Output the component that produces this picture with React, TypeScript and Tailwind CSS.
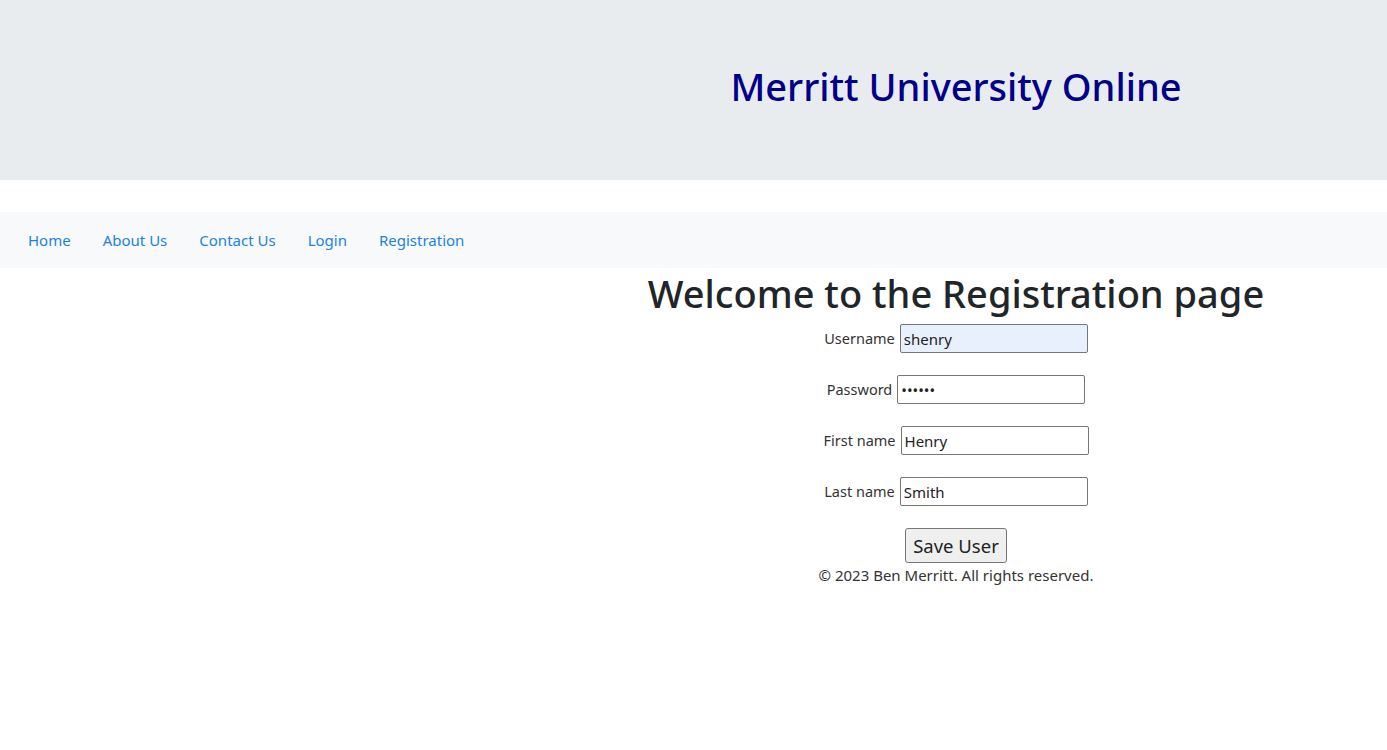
import { useState } from "react";

const font = { fontFamily: '"Noto Sans", "Open Sans", sans-serif' };

function Field({
  label,
  type = "text",
  value,
  filled,
}: {
  label: string;
  type?: string;
  value: string;
  filled?: boolean;
}) {
  const [v, setV] = useState(value);
  return (
    <div className="flex items-center justify-center h-[29px]">
      <label className="text-[14.5px] text-[#333] mr-[5px] pt-[1px]">{label}</label>
      <input
        type={type}
        value={v}
        onChange={(e) => setV(e.target.value)}
        className={
          "w-[188px] h-[29px] border border-[#767676] rounded-[2px] px-[3px] text-[15px] text-[#222] outline-none " +
          (filled ? "bg-[#e8f0fe]" : "bg-white")
        }
      />
    </div>
  );
}

export default function App() {
  return (
    <div className="min-h-[750px] bg-white" style={font}>
      <header className="h-[180px] bg-[#e9ecef] grid grid-cols-[525px_1fr] items-center">
        <div />
        <h1 className="text-center text-[38px] font-medium text-[#00008b] pb-[7px]">
          Merritt University Online
        </h1>
      </header>

      <nav className="mt-[32px] h-[56px] bg-[#f8f9fa] flex items-center pl-[12px]">
        {["Home", "About Us", "Contact Us", "Login", "Registration"].map((l) => (
          <a key={l} href="#" className="px-[16px] text-[15px] text-[#1b83dd]">
            {l}
          </a>
        ))}
      </nav>

      <main className="grid grid-cols-[525px_1fr]">
        <div />
        <div className="flex flex-col items-center">
          <h2 className="text-[38px] font-medium text-[#212529] leading-[52px] mt-[-1px]">
            Welcome to the Registration page
          </h2>
          <form className="flex flex-col gap-[22px] mt-[5px]" onSubmit={(e) => e.preventDefault()}>
            <Field label="Username" value="shenry" filled />
            <Field label="Password" type="password" value="shenry" />
            <Field label="First name" value="Henry" />
            <Field label="Last name" value="Smith" />
            <div className="flex justify-center">
              <button
                type="submit"
                className="h-[35px] px-[7px] border border-[#767676] rounded-[3px] bg-[#efefef] text-[18.5px] text-[#222]"
              >
                Save User
              </button>
            </div>
          </form>
          <p className="text-[15px] text-[#333] mt-[1px]">© 2023 Ben Merritt. All rights reserved.</p>
        </div>
      </main>
    </div>
  );
}
